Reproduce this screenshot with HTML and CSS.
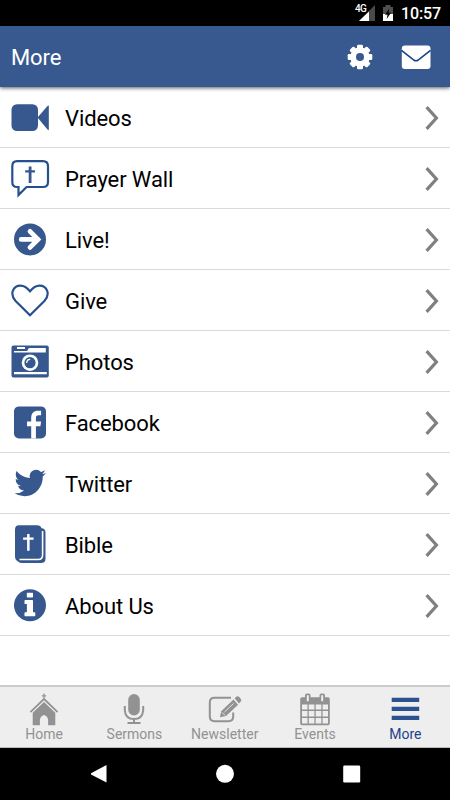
FILE: index.html
```html
<!DOCTYPE html>
<html lang="en">
<head>
<meta charset="utf-8">
<title>More</title>
<link rel="stylesheet" href="styles.css">
</head>
<body>
<svg class="defs" width="0" height="0">
  <symbol id="chevron" viewBox="0 0 16 26"><path d="M2.600 2.200 12.400 13 2.600 23.800" fill="none" stroke="#808080" stroke-width="3.200"/></symbol>
</svg>
<div class="status">
  <svg class="signal" width="22" height="26" viewBox="0 0 22 26"><path d="M22 5v16H6z" fill="#4a4a4a"/><path d="M16 11.500V21H6z" fill="#fff"/></svg>
  <span class="net">4G</span>
  <svg class="battery" width="12" height="26" viewBox="0 0 12 26"><path d="M1 7h2.500V5h5v2H11v7H1z" fill="#505050"/><path d="M1 14h10v7H1z" fill="#fff"/><path d="M7.300 8.500 3 14.700h2.500L4.700 19 9 12.700H6.500z" fill="#000"/></svg>
  <span class="clock">10:57</span>
</div>
<header class="header">
  <h1>More</h1>
  <svg class="gear" width="26" height="26" viewBox="0 0 26 26"><g fill="#fff"><circle cx="13" cy="13" r="9.700"/><rect x="10" y=".7" width="6" height="24.600" rx="1.300"/><rect x=".7" y="10" width="24.600" height="6" rx="1.300"/><g transform="rotate(45 13 13)"><rect x="10" y=".7" width="6" height="24.600" rx="1.300"/><rect x=".7" y="10" width="24.600" height="6" rx="1.300"/></g></g><circle cx="13" cy="13" r="4" fill="#38598f"/></svg>
  <svg class="mail" width="30" height="26" viewBox="0 0 30 26"><rect x=".8" y="1.500" width="28.700" height="23.500" rx="3" fill="#fff"/><path d="M.5 6.300c4 3.300 8.500 6.700 12.200 9.700q2.300 1.600 4.600 0C21 13 25.500 9.600 29.500 6.300" fill="none" stroke="#194489" stroke-width="1.600"/></svg>
</header>
<main class="list">
  <a class="row"><svg class="icon" viewBox="0 0 40 40"><rect x="1.500" y="6.200" width="26.500" height="26.800" rx="5.500"/><path d="M27.500 19.500 37.500 8q1.300-1.200 1.300.3v23q0 1.500-1.300.3z"/></svg><span>Videos</span><svg class="chev"><use href="#chevron"/></svg></a>
  <a class="row"><svg class="icon" viewBox="0 0 40 40"><path class="line" d="M7 2.200h26q5 0 5 5V23q0 5-5 5H16.500l-8 8V28H7q-4.700 0-4.700-5V7.200q0-5 4.700-5z"/><path d="M18.700 7.500h2.800v3.700H25v2.400h-3.500V24h-2.800V13.600h-3.500v-2.400h3.500z"/></svg><span>Prayer Wall</span><svg class="chev"><use href="#chevron"/></svg></a>
  <a class="row"><svg class="icon" viewBox="0 0 40 40"><circle cx="20" cy="19.400" r="16"/><path d="M11.200 19.400H28M20 11.400l8 8-8 8" fill="none" stroke="#fff" stroke-width="4.800" stroke-linecap="round" stroke-linejoin="miter"/></svg><span>Live!</span><svg class="chev"><use href="#chevron"/></svg></a>
  <a class="row"><svg class="icon" viewBox="0 0 40 40"><path class="line" d="M20 34.300 5.600 20C-.8 13 3.200 4.700 10.500 4.700c4.300 0 6.800 2.300 9.500 5.600 2.700-3.300 5.200-5.600 9.500-5.600C36.800 4.700 40.800 13 34.400 20z"/></svg><span>Give</span><svg class="chev"><use href="#chevron"/></svg></a>
  <a class="row"><svg class="icon" viewBox="0 0 40 40"><rect x="1.500" y="3.400" width="37.300" height="32" rx="2"/><g fill="#fff"><path d="M7 5h8v2H7zM19.500 6h16.300v4.500H4V9h12.500q1.500-.2 1.500-1.500.1-1.500 1.500-1.500zM4 29.900h32.800v2.300H4z"/><circle cx="20" cy="20.700" r="8.300"/></g><circle cx="20" cy="20.700" r="5.600"/><path d="M16.700 21q0-3.700 3.500-3.700" fill="none" stroke="#fff" stroke-width="1.300"/></svg><span>Photos</span><svg class="chev"><use href="#chevron"/></svg></a>
  <a class="row"><svg class="icon" viewBox="0 0 40 40"><rect x="4" y="3.400" width="32" height="32" rx="5"/><path d="M21.200 35.400V23.200H17v-4.800h4.200v-3.600c0-4.500 2.700-7 7-7h2.900v4.500h-2.600c-1.900 0-2.600 1-2.600 2.700v3.400h5.200l-.7 4.800h-4.500v12.200z" fill="#fff"/></svg><span>Facebook</span><svg class="chev"><use href="#chevron"/></svg></a>
  <a class="row"><svg class="icon" viewBox="0 0 40 40"><path transform="translate(4.500 2.800) scale(1.310 1.350)" d="M23.953 4.570a10 10 0 01-2.825.775 4.958 4.958 0 002.163-2.723c-.951.555-2.005.959-3.127 1.184a4.920 4.920 0 00-8.384 4.482C7.690 8.095 4.067 6.130 1.640 3.162a4.822 4.822 0 00-.666 2.475c0 1.710.87 3.213 2.188 4.096a4.904 4.904 0 01-2.228-.616v.06a4.923 4.923 0 003.946 4.827 4.996 4.996 0 01-2.212.085 4.936 4.936 0 004.604 3.417 9.867 9.867 0 01-6.102 2.105c-.39 0-.779-.023-1.170-.067a13.995 13.995 0 007.557 2.209c9.053 0 13.998-7.496 13.998-13.985 0-.21 0-.42-.015-.63A9.935 9.935 0 0024 4.590z"/></svg><span>Twitter</span><svg class="chev"><use href="#chevron"/></svg></a>
  <a class="row"><svg class="icon" viewBox="0 0 40 40"><path d="M9 .2h18q3.800 0 4.500 3 4 0 4 4.500v26q0 4.300-4.500 4.300H12.500q-3 0-4.500-1.500-3-1.700-3-5V4.500Q5 .2 9 .2z"/><path d="M32.600 6v24q0 4.500-4.300 4.500H9.500" fill="none" stroke="#fff" stroke-width="1.600"/><path d="M17.100 9h2.500v3.500h4v2.300h-4v11h-2.500v-11h-4v-2.300h4z" fill="#fff"/></svg><span>Bible</span><svg class="chev"><use href="#chevron"/></svg></a>
  <a class="row"><svg class="icon" viewBox="0 0 40 40"><circle cx="20" cy="19.200" r="16"/><path d="M17.500 6.800h4.800q.7 0 .7.700v3.300q0 .7-.7.700h-4.800q-.7 0-.7-.7V7.500q0-.7.700-.7zM15.200 14h7.100q.7 0 .7.700v11.600h1.600q.7 0 .7.700v2.500q0 .7-.7.700h-9.400q-.7 0-.7-.7V27q0-.7.700-.7h1.700v-8.200h-1.700q-.7 0-.7-.7v-2.700q0-.7.700-.7z" fill="#fff"/></svg><span>About Us</span><svg class="chev"><use href="#chevron"/></svg></a>
</main>
<nav class="tabs">
  <a class="tab"><svg viewBox="0 0 36 36"><path d="M17.400 1.500h1.300v1.800h1.500v1.200h-1.500v1.800L32.200 19.400l-1.200 1.300L18 8.300 5 20.700l-1.200-1.300L17.400 6.300V4.500h-1.500V3.300h1.500z"/><path d="M18 10 29.300 20.700v12.600h-7.200V28q-.3-3.800-4.100-5-3.800 1.200-4.100 5v5.300H6.700V20.700z"/></svg><span>Home</span></a>
  <a class="tab"><svg viewBox="0 0 36 36"><rect x="12.200" y="2" width="11.600" height="21.500" rx="5.800"/><path d="M8.800 14v4.500q.8 8.600 9.200 8.600t9.200-8.600V14M18 27v4.500M11.500 31h13" fill="none" stroke="#929292" stroke-width="2"/></svg><span>Sermons</span></a>
  <a class="tab"><svg viewBox="0 0 36 36"><path d="M24 5.800H7.500q-4.700 0-4.700 4.700v14q0 4.700 4.700 4.700h14q4.700 0 4.700-4.700v-4" fill="none" stroke="#929292" stroke-width="2"/><path d="m27.600 6.300 2-1.800q1.500-.9 2.700.6l1.600 2q1 1.500-.3 2.700L32 11.500zM26.500 7.500l4.600 5.200L19 24l-6 1.300 1.200-6z"/><path d="m17.500 20 9-8.500M15 20.300l3 3" stroke="#eee" stroke-width=".9"/></svg><span>Newsletter</span></a>
  <a class="tab"><svg viewBox="0 0 36 36"><path d="M5 5.300h3v-2Q8 1.500 10 1.500h1.500q2 0 2 1.800v2h9v-2q0-1.800 2-1.800H26q2 0 2 1.800v2h3q1.800 0 1.800 1.800v24.300q0 1.800-1.800 1.800H5q-1.800 0-1.800-1.800V7.100q0-1.800 1.800-1.800z"/><path fill="#eee" d="M9.800 3.300h2v6h-2zm14.400 0h2v6h-2zM5 12.500h5.500v5H5zm6.800 0h5.600v5h-5.600zm6.900 0h5.600v5h-5.600zm6.900 0H31v5h-5.400zM5 19h5.500v5.500H5zm6.800 0h5.600v5.500h-5.600zm6.900 0h5.600v5.500h-5.600zm6.900 0H31v5.500h-5.400zM5 26h5.500v5.500H5zm6.800 0h5.600v5.500h-5.600zm6.900 0h5.600v5.500h-5.600zm6.900 0H31v5.500h-5.400z"/></svg><span>Events</span></a>
  <a class="tab active"><svg viewBox="0 0 36 36"><path d="M4.700 5.700h27.500V10H4.700zm0 9h27.500V19H4.700zm0 9h27.500V28H4.700z"/></svg><span>More</span></a>
</nav>
<footer class="sysnav">
  <svg viewBox="0 0 20 20"><path d="M18.500 1v17.500L3 10.400V9.300z"/></svg>
  <svg viewBox="0 0 20 20"><circle cx="10" cy="9.800" r="9"/></svg>
  <svg viewBox="0 0 20 20"><rect x="1.200" y="1.600" width="17" height="17" rx="1.300"/></svg>
</footer>
</body>
</html>
```
FILE: styles.css
```css
* { box-sizing: border-box; }
body { margin: 0; width: 450px; height: 800px; display: flex; flex-direction: column; background: #fff; font-family: Roboto, "Liberation Sans", sans-serif; overflow: hidden; }
.defs { position: absolute; }
.status { height: 26px; flex: none; background: #000; color: #fff; display: flex; justify-content: flex-end; align-items: center; padding-right: 9px; position: relative; }
.signal { margin-right: 7px; }
.battery { margin-right: 7px; }
.net { position: absolute; left: 355px; top: 3px; font-size: 10px; line-height: 12px; font-weight: 500; letter-spacing: -.8px; }
.clock { font-size: 16px; font-weight: 500; line-height: 26px; padding-top: 2px; letter-spacing: -.1px; }
.header { height: 61px; flex: none; background: #38598f; color: #fff; display: flex; align-items: center; padding: 0 19px 0 11px; box-shadow: 0 1px 4px rgba(0,0,0,.65); position: relative; }
.header h1 { margin: 3px auto 0 0; font-size: 22px; font-weight: 400; line-height: 30px; letter-spacing: -.1px; }
.gear { margin-right: 28px; }
.list { flex: 1; }
.row { height: 61px; display: flex; align-items: center; padding: 2px 10px 0; border-bottom: 1px solid #dadada; font-size: 22px; line-height: 26px; letter-spacing: -.1px; color: #000; }
.icon { width: 40px; height: 40px; flex: none; margin-right: 15px; fill: #36588f; }
.line { fill: none; stroke: #25508f; stroke-width: 2.2; }
.row span { flex: 1; padding-top: 2px; }
.chev { width: 16px; height: 26px; }
.tabs { height: 63px; flex: none; display: flex; background: #eee; border-top: 2px solid #ccc; border-bottom: 1px solid #bbb; }
.tab { width: 90.3px; flex: none; display: flex; flex-direction: column; align-items: center; color: #929292; font-size: 14px; line-height: 16px; padding-top: 5px; position: relative; left: -1px; }
.tab svg { width: 36px; height: 36px; fill: #929292; flex: none; }
.tab span { margin-top: -2px; }
.tab.active { color: #1d4289; }
.tab.active svg { fill: #2b528f; }
.sysnav { height: 52px; flex: none; background: #000; display: flex; justify-content: center; align-items: center; gap: 107px; }
.sysnav svg { width: 20px; height: 20px; fill: #fff; }
```
